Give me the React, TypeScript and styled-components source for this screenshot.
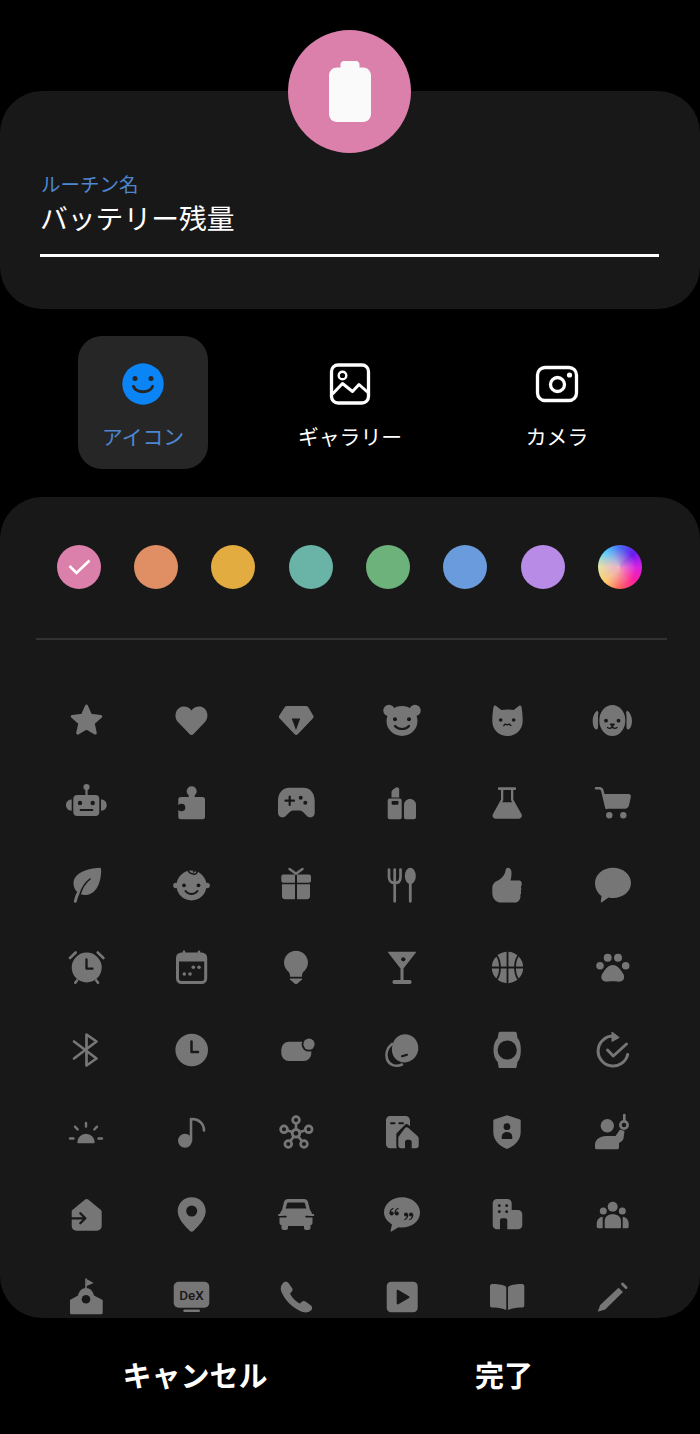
import React from "react";
import styled, { createGlobalStyle } from "styled-components";

const PANEL = "#181818";
const BLUE = "#4d87d0";
const CJK = `"Noto Sans CJK JP", "Noto Sans", sans-serif`;

const Global = createGlobalStyle`
  html, body { margin: 0; padding: 0; background: #000; }
  * { box-sizing: border-box; }
`;

const Screen = styled.main`
  width: 700px;
  height: 1434px;
  overflow: hidden;
  background: #000;
  font-family: ${CJK};
  color: #fff;
  display: flex;
  flex-direction: column;
`;

const NameCard = styled.section`
  position: relative;
  margin-top: 91px;
  height: 218px;
  border-radius: 42px;
  background: ${PANEL};
  padding: 81px 41px 0 41px;
`;

const Badge = styled.div`
  position: absolute;
  left: 288px;
  top: -61px;
  width: 123px;
  height: 123px;
  border-radius: 50%;
  background: #db7fab;
  display: flex;
  align-items: center;
  justify-content: center;
`;

const NameLabel = styled.div`
  font-size: 19.5px;
  line-height: 26px;
  margin-top: -1px;
  color: ${BLUE};
`;

const NameValue = styled.div`
  font-size: 27.8px;
  line-height: 36px;
  margin-top: 2px;
  margin-left: -1px;
  color: #fff;
`;

const NameRule = styled.div`
  height: 3px;
  margin: 19px 0 0 -1px;
  width: 619px;
  background: #fff;
`;

const Tabs = styled.nav`
  display: flex;
  gap: 77px;
  margin-top: 27px;
  padding-left: 78px;
`;

const Tab = styled.div<{ $active?: boolean }>`
  width: 130px;
  height: 133px;
  border-radius: 24px;
  background: ${(p) => (p.$active ? "#262626" : "transparent")};
  color: ${(p) => (p.$active ? BLUE : "#fff")};
  display: flex;
  flex-direction: column;
  align-items: center;
  padding-top: 26px;
`;

const TabIcon = styled.svg`
  width: 44px;
  height: 44px;
  display: block;
`;

const TabLabel = styled.span`
  margin-top: 16px;
  font-size: 20.8px;
  line-height: 28px;
  white-space: nowrap;
`;

const Panel = styled.section`
  margin-top: 28px;
  height: 821px;
  border-radius: 42px;
  background: ${PANEL};
  overflow: hidden;
  padding-top: 48px;
`;

const Swatches = styled.div`
  display: flex;
  justify-content: space-between;
  padding: 0 58px 0 56.8px;
`;

const Swatch = styled.div<{ $bg: string }>`
  width: 44px;
  height: 44px;
  border-radius: 50%;
  background: ${(p) => p.$bg};
`;

const Divider = styled.div`
  height: 2px;
  margin: 49px 33px 0 36px;
  background: #323232;
`;

const IconGrid = styled.div`
  display: grid;
  grid-template-columns: repeat(6, 105.2px);
  grid-auto-rows: 82.4px;
  padding-left: 33.4px;
  margin-top: 39px;
  color: #767676;
`;

const Cell = styled.div`
  display: flex;
  align-items: center;
  justify-content: center;
`;

const Glyph = styled.svg`
  width: 40px;
  height: 40px;
  display: block;
  overflow: visible;
  fill: currentColor;
`;

const Footer = styled.footer`
  flex: 1;
  display: grid;
  grid-template-columns: 309px 309px;
  padding: 0 0 4px 40.5px;
  align-items: center;
`;

const FooterButton = styled.div`
  text-align: center;
  font-size: 29px;
  font-weight: 700;
  line-height: 40px;
  color: #fff;
`;

const S = { stroke: "currentColor", fill: "none", strokeLinecap: "round", strokeLinejoin: "round" } as const;
const D = { stroke: PANEL, fill: "none", strokeLinecap: "round", strokeLinejoin: "round" } as const;

const icons: React.ReactNode[] = [
  /* star */
  <path d="M20.5 6L24.6 15.3L34.8 16.4L27.2 23.2L29.3 33.1L20.5 28L11.7 33.1L13.8 23.2L6.2 16.4L16.4 15.3Z" stroke="currentColor" strokeWidth="3" strokeLinejoin="round" />,
  /* heart */
  <path d="M20.5 35C19.8 35 19.2 34.7 18.7 34.2L7 22C2 16.5 5 6.5 12.8 6.5C16 6.5 18.8 8 20.5 10.5C22.2 8 25 6.5 28.2 6.5C36 6.5 39 16.5 34 22L22.3 34.2C21.8 34.7 21.2 35 20.5 35Z" />,
  /* diamond */
  <path fillRule="evenodd" d="M11 6H30C31 6 31.7 6.4 32.3 7.2L37.2 15.5C37.7 16.5 37.7 17.5 37 18.3L21.8 34.2C20.8 35.2 19.5 35.2 18.6 34.2L3.5 18.3C2.8 17.5 2.8 16.5 3.3 15.5L8.7 7.2C9.3 6.4 10 6 11 6ZM15.7 18.4L20 30L24.2 18.4Z" />,
  /* bear */
  <>
    <circle cx="7" cy="10.5" r="5.7" />
    <circle cx="33" cy="10.5" r="5.7" />
    <ellipse cx="20" cy="21" rx="15.5" ry="15" />
    <circle cx="13" cy="19.3" r="2" fill={PANEL} />
    <circle cx="27" cy="19.3" r="2" fill={PANEL} />
    <path d="M13 26C16.5 30 23.5 30 27 26" strokeWidth="2.2" {...D} />
  </>,
  /* cat */
  <>
    <path d="M6.7 6.2C7.2 5.2 8 5.2 8.8 5.8L14.3 10C18 9.2 23 9.2 26.7 10L32.2 5.8C33 5.2 33.8 5.2 34.3 6.2C35.2 11 35.7 15.5 35.7 21C35.7 30 28.5 36 20.5 36C12.5 36 5.3 30 5.3 21C5.3 15.5 5.8 11 6.7 6.2Z" />
    <circle cx="13.7" cy="20" r="1.8" fill={PANEL} />
    <circle cx="26.7" cy="20" r="1.8" fill={PANEL} />
    <path d="M16.8 25.5L18.4 24L20.3 25L22.2 24L23.8 25.5" strokeWidth="1.4" {...D} />
  </>,
  /* dog */
  <>
    <ellipse cx="20.3" cy="20.5" rx="13" ry="15.5" />
    <path d="M5.5 10.5C2.8 12 0.7 16 0.7 21C0.7 25 1.8 28 3.5 29.3C5 30 5.8 29 6 27.5C6.2 22 5.6 16 6.4 12.5Z" />
    <path d="M35 10.5C37.7 12 40 16 40 21C40 25 38.7 28 37 29.3C35.5 30 34.7 29 34.5 27.5C34.3 22 34.9 16 34.1 12.5Z" />
    <circle cx="14" cy="20.7" r="1.9" fill={PANEL} />
    <circle cx="26.5" cy="20.7" r="1.9" fill={PANEL} />
    <path d="M18.5 24.2H22.2L20.3 26ZM15.5 27.5C17.5 29 19 28.5 20.3 26.5C21.6 28.5 23 29 25 27.5" strokeWidth="1.4" {...D} />
  </>,
  /* robot */
  <>
    <circle cx="20.5" cy="4" r="3.1" />
    <rect x="19.4" y="5" width="2.2" height="8" />
    <rect x="7.3" y="12" width="26" height="21" rx="4" />
    <path d="M5.7 16.5C2 16.5 0 19 0 22C0 25 2 27.7 5.7 27.7Z" />
    <path d="M35 16.5C38.7 16.5 40.7 19 40.7 22C40.7 25 38.7 27.7 35 27.7Z" />
    <circle cx="14" cy="20" r="2.2" fill={PANEL} />
    <circle cx="26.7" cy="20" r="2.2" fill={PANEL} />
    <path d="M14.5 27H26.5" strokeWidth="1.8" {...D} />
  </>,
  /* puzzle */
  <>
    <circle cx="20.7" cy="8.3" r="5" />
    <rect x="17.7" y="9" width="6" height="7" />
    <rect x="7.3" y="14" width="26.7" height="22.3" rx="2.5" />
    <circle cx="10.5" cy="24.5" r="3.8" fill={PANEL} />
    <rect x="6.8" y="23" width="4" height="3" fill={PANEL} />
  </>,
  /* gamepad */
  <>
    <path d="M13 4.7H27.7C34 4.7 38.7 10 38.7 18V30C38.7 34 34 36 31 33L27.5 29.5C26 28 24.5 27.5 23 27.5H17.7C16.2 27.5 14.7 28 13.2 29.5L9.7 33C6.7 36 2 34 2 30V18C2 10 6.7 4.7 13 4.7Z" />
    <path d="M9.5 17.7H18M13.7 13.5V22" strokeWidth="2.2" {...D} />
    <circle cx="24.7" cy="14.7" r="2" fill={PANEL} />
    <circle cx="29.3" cy="19.7" r="2" fill={PANEL} />
  </>,
  /* cosmetics */
  <>
    <path d="M9.5 14.5V9C9.5 7.5 13.5 4.5 15 4.3C16.5 4.2 17.2 5.2 17.2 6.5V14.5Z" />
    <rect x="5.7" y="15.5" width="14" height="20.8" rx="2" />
    <rect x="9.7" y="18" width="6.7" height="3.7" rx="0.6" fill={PANEL} />
    <path d="M22 21.8C22 18.5 24.7 16 28 16C31.3 16 34 18.5 34 21.8V34.3C34 35.4 33.1 36.3 32 36.3H24C22.9 36.3 22 35.4 22 34.3Z" />
  </>,
  /* flask */
  <path fillRule="evenodd" d="M12 4.3H28C28.6 4.3 29 4.7 29 5.3V6C29 6.6 28.6 7 28 7H26.3V16.5L34.4 31C35.6 33.3 34.2 35.7 31.7 35.7H8.7C6.2 35.7 4.8 33.3 6 31L14 16.5V7H12C11.4 7 11 6.6 11 6V5.3C11 4.7 11.4 4.3 12 4.3ZM16.3 7V17.2L15.2 19.2H25.2L24 17.2V7Z" />,
  /* cart */
  <>
    <path d="M4 5.3H7.5C9 5.3 10 6.3 10.4 8L14.5 25" strokeWidth="2.6" {...S} />
    <path d="M11.3 11H36.7C38.3 11 39.2 12.4 38.8 14L37 22.2C36.5 24.5 35 25.7 33 25.7H15Z" />
    <circle cx="17.3" cy="32.3" r="3.2" />
    <circle cx="31.3" cy="32.3" r="3.2" />
  </>,
  /* leaf */
  <>
    <path d="M33.5 2.8C35 2.8 35.3 4.5 35.2 6C34.8 17 31 29 20 30C14 30.5 7 26 7.5 17.5C8.5 8 21 3.5 33.5 2.8Z" />
    <path d="M9.3 36.3C10 33 11 30 12.5 27.5" strokeWidth="3" {...S} />
    <path d="M14.3 28.5C16 23 19 18 24 14" strokeWidth="1.6" {...D} />
  </>,
  /* baby */
  <>
    <circle cx="20.5" cy="20.5" r="15" />
    <circle cx="4.9" cy="20.5" r="2.7" />
    <circle cx="36.1" cy="20.5" r="2.7" />
    <path d="M17.5 6.5C20.5 10 26 10 26 7C26 5 22.5 5 22.5 7" strokeWidth="1.6" {...D} />
    <circle cx="13" cy="20.3" r="1.9" fill={PANEL} />
    <circle cx="27.5" cy="20.3" r="1.9" fill={PANEL} />
    <path d="M14.5 26C17.5 30 23.5 30 26.5 26" strokeWidth="2" {...D} />
  </>,
  /* gift */
  <>
    <path d="M13.5 4L20 8.7L26.5 4" strokeWidth="2.5" {...S} />
    <path d="M19 9.5V17.7H7.3C6.2 17.7 5.3 16.8 5.3 15.7V11.5C5.3 10.4 6.2 9.5 7.3 9.5Z" />
    <path d="M21 9.5V17.7H33C34.1 17.7 35 16.8 35 15.7V11.5C35 10.4 34.1 9.5 33 9.5Z" />
    <path d="M6 19.3H19V34.3H9C7.3 34.3 6 33 6 31.3Z" />
    <path d="M21 19.3H34V31.3C34 33 32.7 34.3 31 34.3H21Z" />
  </>,
  /* fork and spoon */
  <>
    <path d="M7 4.5V12C7 16 9.5 18 12.7 18C16 18 18.5 16 18.5 12V4.5M12.7 4.5V36.3" strokeWidth="2.7" {...S} />
    <ellipse cx="28.3" cy="11" rx="5.5" ry="8.3" />
    <path d="M28.3 16V36.3" strokeWidth="2.8" {...S} />
  </>,
  /* thumb */
  <path d="M21 2.8C23.5 2.8 24.5 5 24.5 8C24.5 11 24 13.5 23.5 15.5H32C34 15.5 35 17 34.7 19C34.7 20.5 34.2 21.5 33.8 22C34.5 23 34.5 25 33.8 26C34.3 27 34.2 29 33.3 30C33.8 31.5 33.3 34 32 35.5C31 37 29.5 37.6 28 37.6H14C9 37.6 5.3 33.5 5.3 28V23C5.3 19 8 16.5 11 15.5C14 14 18 10 18.5 5.5C18.7 4 19.5 2.8 21 2.8Z" />,
  /* speech */
  <path d="M21 2.7C31 2.7 39 9.5 39 18C39 26.5 31 33 21 33C19.5 33 18 32.9 16.5 32.5L10 37.3C9.3 37.7 8.8 37.3 8.8 36.5L9.5 31C6 28.5 3 24 3 18C3 9.5 11 2.7 21 2.7Z" />,
  /* alarm */
  <>
    <circle cx="20.7" cy="20.5" r="15" />
    <path d="M4 11L9.7 5.5M31.7 5.5L37.4 11M11 33.5L9.3 35.7M30.3 33.5L32 35.7" strokeWidth="2.6" {...S} />
    <path d="M20.5 12.5V21.7H26.5" strokeWidth="2.3" {...D} />
  </>,
  /* calendar */
  <>
    <rect x="6.5" y="7" width="28.2" height="28.5" rx="4" strokeWidth="3" {...S} />
    <rect x="6.5" y="7" width="28.2" height="7.5" />
    <path d="M13 4.8V8M28 4.8V8" strokeWidth="2.5" {...S} />
    <circle cx="22.3" cy="20.3" r="1.8" />
    <circle cx="28" cy="20.3" r="1.8" />
    <circle cx="13.3" cy="27" r="1.8" />
    <circle cx="19" cy="27" r="1.8" />
  </>,
  /* bulb */
  <>
    <path d="M20 3.7C13.4 3.7 8 9 8 15.5C8 19.5 10 22.5 12.5 24.7C13.7 25.8 14 27.5 14 29.7H26C26 27.5 26.3 25.8 27.5 24.7C30 22.5 32 19.5 32 15.5C32 9 26.6 3.7 20 3.7Z" />
    <path d="M14.5 31.5H25.5C26 31.5 26.2 32 26 32.5L21.5 36.5C20.7 37.2 19.3 37.2 18.5 36.5L14 32.5C13.8 32 14 31.5 14.5 31.5Z" />
  </>,
  /* martini */
  <>
    <path d="M5.5 4.7H34.5L21.5 21.5V33H28C29 33 29.5 33.8 29.5 35C29.5 36.2 29 37 28 37H12C11 37 10.5 36.2 10.5 35C10.5 33.8 11 33 12 33H18.5V21.5Z" strokeLinejoin="round" />
    <circle cx="21.3" cy="12.3" r="2.1" fill={PANEL} />
  </>,
  /* basketball */
  <>
    <circle cx="20.5" cy="20.5" r="15.7" />
    <path d="M20.5 4.8V36.2M4.8 20.5H36.2M10 9C14 15 14 26 10 32M31 9C27 15 27 26 31 32" strokeWidth="1.8" {...D} />
  </>,
  /* paw */
  <>
    <circle cx="8" cy="18.7" r="3.8" />
    <circle cx="15.7" cy="10.7" r="4" />
    <circle cx="26" cy="10.7" r="4" />
    <circle cx="33.7" cy="18.7" r="3.8" />
    <path d="M20.7 18C16 18 13.5 22 11.5 25C9.5 27.5 9 29.5 9.5 31.5C10.5 34.5 14 35 16.5 34.5C19 34 22.5 34 25 34.5C27.5 35 31 34.5 32 31.5C32.5 29.5 32 27.5 30 25C28 22 25.5 18 20.7 18Z" />
  </>,
  /* bluetooth */
  <path d="M8 11.5L30.5 28.5L20.5 35.5V4.5L30.5 11.5L8 28.5" strokeWidth="2.7" {...S} />,
  /* clock */
  <>
    <circle cx="20.7" cy="20" r="16.3" />
    <path d="M20.5 11.5V22H27" strokeWidth="2.5" {...D} />
  </>,
  /* pill with dot */
  <>
    <rect x="5.3" y="11.7" width="30" height="19.3" rx="7.5" />
    <circle cx="33" cy="14.2" r="7.4" fill={PANEL} />
    <circle cx="33" cy="14.2" r="5.6" />
  </>,
  /* earbud */
  <>
    <path d="M23 4.3C30 4.3 36.3 10 36.3 18C36.3 24 33 29 27 31.5C21 34 14 31.5 11 25C8.5 19 10.5 10 16 6.5C18 5 20.5 4.3 23 4.3Z" />
    <path d="M10 14C5 18 3.5 24 5 29C7 35 14 37.5 20 34.5" strokeWidth="2.6" {...S} />
    <path d="M20 26.3L25 24.7" strokeWidth="2" {...D} />
  </>,
  /* watch */
  <>
    <path d="M11.5 3.3C11.5 2.5 12 1.7 13 1.7H28C29 1.7 29.7 2.5 29.7 3.3L30.5 8C33 10.5 33.8 15 33.8 20C33.8 25 33 29.5 30.5 32L29.7 36.5C29.7 37.5 29 38 28 38H13C12 38 11.5 37.5 11.5 36.5L10.7 32C8 29.5 6.5 25 6.5 20C6.5 15 8 10.5 10.7 8Z" />
    <circle cx="20.2" cy="20" r="9.6" fill={PANEL} />
  </>,
  /* refresh check */
  <>
    <path d="M21.5 6A15 15 0 1 0 35.7 24.5" strokeWidth="3" {...S} />
    <path d="M20 2L27.2 7.5L20 11.5Z" stroke="currentColor" strokeWidth="1" strokeLinejoin="round" />
    <path d="M15.5 20L21.3 26L34.5 14" strokeWidth="3" {...S} />
  </>,
  /* sunrise */
  <>
    <path d="M11.3 30.5A8.7 8.7 0 0 1 28.7 30.5C28.7 31 28.3 31.3 28 31.3H12C11.6 31.3 11.3 31 11.3 30.5Z" />
    <path d="M20 11V14.5M9 14.7L11.7 17.5M31 14.7L28.3 17.5M4 26.5H7.5M32.5 26.5H36" strokeWidth="2.4" {...S} />
  </>,
  /* note */
  <>
    <circle cx="14" cy="28.7" r="7" />
    <path d="M20 28.7V7C27.5 6.5 33 11.5 33 18.5" strokeWidth="2.6" {...S} />
  </>,
  /* network */
  <>
    <path d="M20 21.3V8M20 21.3L8 17.3M20 21.3L32.7 17.3M20 21.3L12.3 32M20 21.3L28 32" strokeWidth="2.6" {...S} />
    <circle cx="20" cy="21.3" r="3.8" fill={PANEL} stroke="currentColor" strokeWidth="2.8" />
    <circle cx="20" cy="8" r="3.4" fill={PANEL} stroke="currentColor" strokeWidth="2.7" />
    <circle cx="8" cy="17.3" r="3.4" fill={PANEL} stroke="currentColor" strokeWidth="2.7" />
    <circle cx="32.7" cy="17.3" r="3.4" fill={PANEL} stroke="currentColor" strokeWidth="2.7" />
    <circle cx="12.3" cy="32" r="3.4" fill={PANEL} stroke="currentColor" strokeWidth="2.7" />
    <circle cx="28" cy="32" r="3.4" fill={PANEL} stroke="currentColor" strokeWidth="2.7" />
  </>,
  /* building and home */
  <>
    <path d="M8 4H23.5C25.7 4 28 6 28 8.5V32C28 34.5 26 36.3 23.5 36.3H8C5.7 36.3 4 34.5 4 32V8C4 6 5.7 4 8 4Z" />
    <path d="M9 11.3H12.5M17.3 11.3H21" strokeWidth="2" {...D} />
    <path d="M24.7 14L36.7 24.5V33.5C36.7 35.2 35.4 36.3 34 36.3H19C17.5 36.3 16.3 35.2 16.3 33.5V22.5Z" fill={PANEL} stroke={PANEL} strokeWidth="4" strokeLinejoin="round" />
    <path d="M24.7 15.2C25.3 15.2 25.7 15.4 26.2 15.8L35.5 24C36.3 24.7 36.7 25.5 36.7 26.5V33.5C36.7 35.2 35.4 36.3 34 36.3H29.7V30C29.7 28.7 28.7 27.7 27.5 27.7H25.2C24 27.7 23 28.7 23 30V36.3H19C17.5 36.3 16.3 35.2 16.3 33.5V26C16.3 25.2 16.6 24.4 17.3 23.8L23.2 15.8C23.7 15.4 24.2 15.2 24.7 15.2Z" />
  </>,
  /* shield person */
  <>
    <path d="M20 3.2L33 7.5C33.4 7.7 33.7 8 33.7 8.5V20C33.7 28 28 33.5 20.5 36.8C20.2 37 19.8 37 19.5 36.8C12 33.5 6.3 28 6.3 20V8.5C6.3 8 6.6 7.7 7 7.5Z" />
    <circle cx="20" cy="14.7" r="3.4" fill={PANEL} />
    <path d="M14.7 26V25C14.7 22 17 20 20 20C23 20 25.3 22 25.3 25V26C25.3 26.6 24.9 27 24.3 27H15.7C15.1 27 14.7 26.6 14.7 26Z" fill={PANEL} />
  </>,
  /* person with remote */
  <>
    <circle cx="15.3" cy="13.7" r="6.7" />
    <path d="M3 35.5V33C3 27.5 8 24 14 24H23.5L28 17.5L32.5 19L31.5 26.5C31 28 29.5 30 27 31V35.5C27 36.5 26.3 37.3 25.3 37.3H4.7C3.7 37.3 3 36.5 3 35.5Z" />
    <circle cx="32" cy="13" r="3.6" strokeWidth="2.7" {...S} />
    <path d="M32.3 3V8.5" strokeWidth="2.7" {...S} />
  </>,
  /* home arrow */
  <>
    <path d="M20.7 4C21.4 4 22 4.3 22.5 4.8L34.3 14.5C35.2 15.2 35.7 16 35.7 17V31C35.7 33.5 33.7 35.7 31 35.7H10.3C7.7 35.7 5.7 33.5 5.7 31V17C5.7 16 6 15.2 7 14.5L18.8 4.8C19.3 4.3 20 4 20.7 4Z" />
    <path d="M5 23.3H19M14.3 18.3L19.4 23.3L14.3 28.3" strokeWidth="2.3" {...D} />
  </>,
  /* pin */
  <>
    <path d="M20.7 2.3C12.8 2.3 6.7 8.5 6.7 16C6.7 24 14 31 19 36C20 37 21.4 37 22.4 36C27.4 31 34.7 24 34.7 16C34.7 8.5 28.6 2.3 20.7 2.3Z" />
    <circle cx="20.7" cy="16" r="5.5" fill={PANEL} />
  </>,
  /* car */
  <>
    <path d="M12 4H28C30 4 31.5 5 32 7L34 15C36 17 36.5 20 36.5 22V28C36.5 29.5 35.5 30 34.5 30V33C34.5 34.3 33.5 35 32.3 35H30C28.7 35 28 34.3 28 33V31H12V33C12 34.3 11.3 35 10 35H7.7C6.5 35 5.5 34.3 5.5 33V30C4.5 30 3.5 29.5 3.5 28V22C3.5 20 4 17 6 15L8 7C8.5 5 10 4 12 4Z" />
    <path d="M12.5 7.5H27.5C28.3 7.5 28.8 8 29 8.7L30.3 13.5H9.7L11 8.7C11.2 8 11.7 7.5 12.5 7.5Z" fill={PANEL} />
    <path d="M2.8 21.6H10M30 21.6H37.5" strokeWidth="1.6" {...D} />
    <path d="M3 20H6.5M33.5 20H37.3" strokeWidth="2" {...S} />
  </>,
  /* quote */
  <>
    <path d="M20 2.3C30 2.3 38 9 38 17.5C38 26 30 32.5 20 32.5C19 32.5 17.5 32.4 16.5 32.2L9.5 36.5C8.9 36.8 8.4 36.4 8.5 35.8L10 29.5C5.5 26.5 2 22.5 2 17.5C2 9 10 2.3 20 2.3Z" />
    <circle cx="9.7" cy="18.5" r="2" fill={PANEL} />
    <circle cx="14.8" cy="18.5" r="2" fill={PANEL} />
    <path d="M8 18C8.3 15.5 9.5 14 11 13.5M13 18C13.3 15.5 14.5 14 16 13.5" strokeWidth="1.3" {...D} />
    <circle cx="24" cy="19.5" r="2" fill={PANEL} />
    <circle cx="29" cy="19.5" r="2" fill={PANEL} />
    <path d="M25.8 20C25.5 22.5 24.3 24 22.8 24.5M30.8 20C30.5 22.5 29.3 24 27.8 24.5" strokeWidth="1.3" {...D} />
  </>,
  /* building */
  <>
    <path fillRule="evenodd" d="M10 4H20.5C23 4 24.7 6 24.7 8.3V15H31C33.5 15 35.3 17 35.3 19.5V30C35.3 32.5 33.5 34.3 31 34.3H20.3V25.5C20.3 24.2 19.3 23.3 18.2 23.3H15.2C14 23.3 13 24.2 13 25.5V34.3H10C7.5 34.3 5.7 32.5 5.7 30V8.3C5.7 6 7.5 4 10 4Z" />
    <circle cx="12.3" cy="10.7" r="1.4" fill={PANEL} />
    <circle cx="19.7" cy="10.7" r="1.4" fill={PANEL} />
    <circle cx="12.3" cy="16.7" r="1.4" fill={PANEL} />
    <circle cx="19.7" cy="16.7" r="1.4" fill={PANEL} />
  </>,
  /* people */
  <>
    <circle cx="20.7" cy="11.7" r="5" />
    <circle cx="11.3" cy="16" r="3.5" />
    <circle cx="30.3" cy="16" r="3.5" />
    <path d="M12.7 32V26C12.7 22 16 19.3 20.7 19.3C25.5 19.3 29 22 29 26V32C29 32.8 28.5 33.3 27.7 33.3H14C13.2 33.3 12.7 32.8 12.7 32Z" />
    <path d="M4.7 31.5V29C4.7 25 7 22 10.7 21.7V33.3H6.5C5.5 33.3 4.7 32.5 4.7 31.5Z" />
    <path d="M36.7 31.5V29C36.7 25 34.4 22 30.7 21.7V33.3H34.9C35.9 33.3 36.7 32.5 36.7 31.5Z" />
  </>,
  /* school */
  <>
    <path d="M20 2V11" strokeWidth="1.6" {...S} />
    <path d="M20.5 2L27.7 6L20.5 9Z" />
    <path d="M4 23L12 18.5C13 14 16 11 20 11C24 11 27 14 28 18.5L36.7 23V35.5C36.7 36.5 36 37.3 35 37.3H5.5C4.5 37.3 4 36.5 4 35.5Z" />
    <circle cx="20" cy="22.3" r="4.3" fill={PANEL} />
  </>,
  /* DeX */
  <>
    <rect x="2.7" y="4.7" width="35.6" height="26" rx="5" />
    <rect x="12.3" y="32.4" width="16.7" height="2.7" rx="1.3" />
    <text x="20.5" y="22.6" textAnchor="middle" fontFamily="Roboto, sans-serif" fontSize="13.5" fontWeight="500" fill={PANEL}>DeX</text>
  </>,
  /* phone */
  <path d="M7 6C8.5 4.5 11 4 12.5 6L16 11C17 12.5 16.5 14 15.5 15L14 16.5C15.5 20 20 25 24 26.5L25.5 25C26.5 24 28 23.5 29.5 24.5L35 28.5C36.5 30 36.5 32 35 33.5C32 36 28 36 24 34C16 30 9 23 6 16C4 12 4.5 9 7 6Z" />,
  /* play */
  <>
    <rect x="4.7" y="4.7" width="31" height="30.6" rx="4.5" />
    <path d="M14.7 14C14.7 13 15.5 12.6 16.3 13L27 19.2C27.8 19.7 27.8 20.6 27 21L16.3 27.2C15.5 27.7 14.7 27.2 14.7 26.3Z" fill={PANEL} />
  </>,
  /* book */
  <>
    <path d="M3 9C3 8 3.8 7 5 7C10 7 15 7.5 18 9C19 9.5 19.3 10 19.3 11V33C15 31 9 30.5 5 30.5C3.8 30.5 3 29.5 3 28.5Z" />
    <path d="M37.3 9C37.3 8 36.5 7 35.3 7C30.3 7 25.3 7.5 22.3 9C21.3 9.5 21 10 21 11V33C25.3 31 31.3 30.5 35.3 30.5C36.5 30.5 37.3 29.5 37.3 28.5Z" />
  </>,
  /* pencil */
  <>
    <path d="M8.2 28L26.5 10.7L31 15L13.2 32.5L5.7 34.7Z" strokeLinejoin="round" />
    <path d="M30.5 7L34 10.5" strokeWidth="3" {...S} />
  </>,
];

const swatches = ["#db7fab", "#e08e63", "#e3ac41", "#69b3a7", "#6db17b", "#6a9bdc", "#b78be6"];
const rainbow =
  "radial-gradient(circle at 42% 52%, rgba(236,176,200,.95) 0, rgba(236,176,200,0) 58%), conic-gradient(from 0deg, #4a6cf2, #6a1cf0 45deg, #d820e0 90deg, #ff20a0 135deg, #ff6060 180deg, #ffd060 225deg, #e4ecA0 270deg, #50d0ff 315deg, #4a6cf2)";

export default function App() {
  return (
    <Screen>
      <Global />
      <NameCard>
        <Badge>
          <svg width="42" height="61" viewBox="0 0 42 61" fill="#fafafa" aria-hidden>
            <path d="M15 0H27C29 0 30.5 1.5 30.5 3.5V6.5H34C38.4 6.5 42 10 42 14.5V53C42 57.4 38.4 61 34 61H8C3.6 61 0 57.4 0 53V14.5C0 10 3.6 6.5 8 6.5H11.5V3.5C11.5 1.5 13 0 15 0Z" />
          </svg>
        </Badge>
        <NameLabel>ルーチン名</NameLabel>
        <NameValue>バッテリー残量</NameValue>
        <NameRule />
      </NameCard>

      <Tabs>
        <Tab $active>
          <TabIcon viewBox="0 0 44 44">
            <circle cx="22" cy="22" r="20.7" fill="#0b84f6" />
            <circle cx="14" cy="16.5" r="2.5" fill="#262626" />
            <circle cx="30" cy="16.5" r="2.5" fill="#262626" />
            <path d="M12.5 24.5C15.5 31.5 28.5 31.5 31.5 24.5" stroke="#262626" strokeWidth="3" fill="none" strokeLinecap="round" />
          </TabIcon>
          <TabLabel>アイコン</TabLabel>
        </Tab>
        <Tab>
          <TabIcon viewBox="0 0 44 44">
            <rect x="3.5" y="3" width="37" height="38" rx="6.5" stroke="#fff" strokeWidth="3.3" fill="none" />
            <circle cx="14.5" cy="13.5" r="3.8" stroke="#fff" strokeWidth="2.4" fill="none" />
            <path d="M4.5 32L14.5 21.5L24.5 29.5L31 22.5L40 30.5" stroke="#fff" strokeWidth="3" fill="none" strokeLinejoin="round" />
          </TabIcon>
          <TabLabel>ギャラリー</TabLabel>
        </Tab>
        <Tab>
          <TabIcon viewBox="0 0 44 44">
            <rect x="2.5" y="5.5" width="39" height="33" rx="7.5" stroke="#fff" strokeWidth="3.3" fill="none" />
            <circle cx="22.5" cy="22.5" r="7" stroke="#fff" strokeWidth="3.3" fill="none" />
            <circle cx="34.5" cy="13" r="2.6" fill="#fff" />
          </TabIcon>
          <TabLabel>カメラ</TabLabel>
        </Tab>
      </Tabs>

      <Panel>
        <Swatches>
          {swatches.map((c, i) => (
            <Swatch key={c} $bg={c}>
              {i === 0 && (
                <svg width="44" height="44" viewBox="0 0 44 44" aria-hidden>
                  <path d="M12.5 21L19.5 28L32.5 15.5" stroke="#fff" strokeWidth="2.6" fill="none" />
                </svg>
              )}
            </Swatch>
          ))}
          <Swatch $bg={rainbow} />
        </Swatches>
        <Divider />
        <IconGrid>
          {icons.map((g, i) => (
            <Cell key={i}>
              <Glyph viewBox="0 0 40 40">{g}</Glyph>
            </Cell>
          ))}
        </IconGrid>
      </Panel>

      <Footer>
        <FooterButton>キャンセル</FooterButton>
        <FooterButton>完了</FooterButton>
      </Footer>
    </Screen>
  );
}
